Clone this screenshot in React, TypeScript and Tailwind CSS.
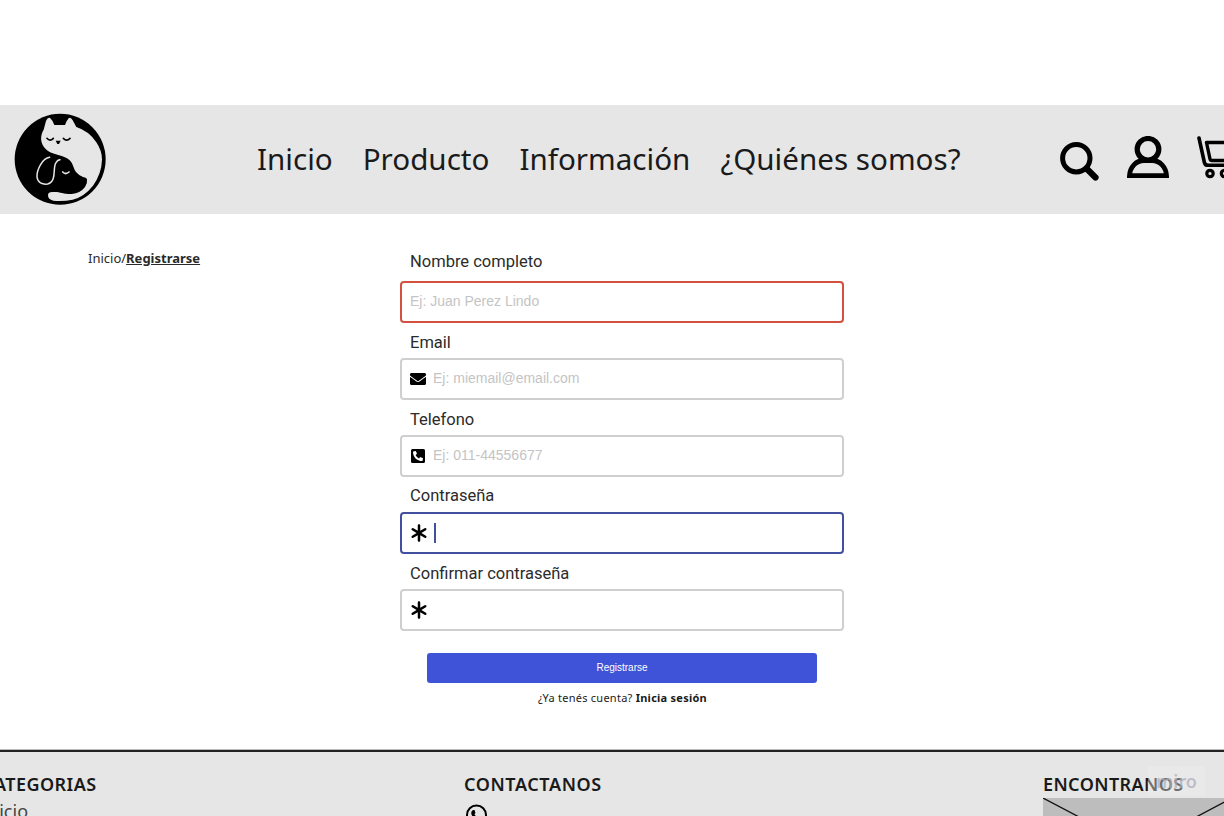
import type { ReactNode } from "react";
import { FaEnvelope, FaPhoneSquareAlt } from "react-icons/fa";
import { FaAsterisk } from "react-icons/fa6";

const noto = "font-['Noto_Sans',sans-serif]";

function Logo() {
  return (
    <svg className="h-[92px] w-[92px] shrink-0" viewBox="42 51 276 276">
      <circle cx="180.500" cy="190" r="136.500" fill="#000" />
      <path
        fill="#e6e6e6"
        d="M131 101L138 75Q144 62 151 67Q157 72 163 87H195Q201 72 206 67Q212 62 218 73L229 93Q267 105 289 139Q306 164 306 191Q305 232 279 269Q252 303 218 311Q189 317 160 314Q144 311 144 298Q144 288 157 288C180 286 190 295 215 294Q242 291 255 273Q263 262 261 249Q259 245 249 243Q237 239 228 228C216 211 222 194 191 182C169 175 150 172 137 159C120 142 120 119 131 101Z"
      />
      <path
        fill="none"
        stroke="#e6e6e6"
        strokeWidth="4.500"
        strokeLinecap="round"
        d="M149 184C128 187 110 219 111 243C113 260 126 266 143 264C172 256 157 213 168 200Q173 191 180 191"
      />
      <g fill="none" stroke="#000" strokeWidth="5" strokeLinecap="round">
        <path d="M141 127Q150 138 160 127" />
        <path d="M190 127Q200 138 210 127" />
      </g>
      <path d="M167 134H182L177 144H172Z" />
      <path d="M188 228Q197 237 207 228" fill="none" stroke="#e6e6e6" strokeWidth="5" strokeLinecap="round" />
    </svg>
  );
}

function SearchIcon() {
  return (
    <svg className="h-[40px] w-[40px] shrink-0" viewBox="0 0 40 40" fill="none" stroke="#000">
      <circle cx="16.300" cy="16.200" r="13.700" strokeWidth="5" />
      <path d="M27 27L35.500 35.500" strokeWidth="6.200" strokeLinecap="round" />
    </svg>
  );
}

function UserIcon() {
  return (
    <svg className="h-[42px] w-[42px] shrink-0" viewBox="0 0 42 42" fill="none" stroke="#000">
      <circle cx="21" cy="13.300" r="10.800" strokeWidth="5.200" />
      <path d="M2.500 39.600C3 31 9 24.500 17 24.500H25C33 24.500 39 31 39.500 39.600Z" strokeWidth="4.800" />
    </svg>
  );
}

function CartIcon() {
  return (
    <svg className="h-[44px] w-[46px] shrink-0" viewBox="0 0 46 44" fill="none" stroke="#000" strokeWidth="3.200">
      <path d="M2 2L7.400 26.500Q8 29.300 11 29.300H38" strokeLinecap="round" strokeWidth="3.600" />
      <path d="M9.500 6.500H40L36 24.500H15Q13.300 24.500 13 23Z" strokeLinejoin="round" strokeWidth="3.400" />
      <circle cx="13" cy="37.500" r="3.200" />
      <circle cx="27.500" cy="37.500" r="3.200" />
    </svg>
  );
}

function Field({
  label,
  labelClass,
  boxClass,
  children,
}: {
  label: string;
  labelClass: string;
  boxClass: string;
  children?: ReactNode;
}) {
  return (
    <label className="block">
      <span
        className={`block pl-[10px] font-['Roboto',sans-serif] text-[16.500px] leading-[20px] text-[#2b2b2b] ${labelClass}`}
      >
        {label}
      </span>
      <span
        className={`flex h-[42px] items-center rounded-[4px] border-2 pb-[1px] pl-[8px] font-['Liberation_Sans',sans-serif] text-[14px] text-[#c4c4c4] ${boxClass}`}
      >
        {children}
      </span>
    </label>
  );
}

export default function App() {
  return (
    <div className={`flex h-[816px] w-[1224px] flex-col overflow-hidden bg-white pt-[105px] text-[#1a1a1a] ${noto}`}>
      <header className="flex h-[109px] shrink-0 items-start bg-[#e6e6e6]">
        <div className="w-[257px] shrink-0 pt-[8px] pl-[14px]">
          <Logo />
        </div>
        <nav className="flex w-[803px] shrink-0 gap-[30px] pt-[34px] text-[29.600px] leading-[40px] whitespace-nowrap">
          <a>Inicio</a>
          <a>Producto</a>
          <a>Información</a>
          <a>¿Quiénes somos?</a>
        </nav>
        <div className="flex shrink-0 pt-[31px]">
          <div className="w-[67px] pt-[6px]">
            <SearchIcon />
          </div>
          <div className="w-[70px]">
            <UserIcon />
          </div>
          <CartIcon />
        </div>
      </header>

      <main className="flex h-[535px] shrink-0">
        <div className="w-[400px] shrink-0 pt-[34px] pl-[88px] text-[13px] leading-[20px] text-[#2a2a2a]">
          Inicio/<b className="underline">Registrarse</b>
        </div>
        <form className="w-[444px] shrink-0 pt-[38px]">
          <Field label="Nombre completo" labelClass="mb-[9px]" boxClass="border-[#d4503f]">
            Ej: Juan Perez Lindo
          </Field>
          <Field label="Email" labelClass="mt-[10px] mb-[5px]" boxClass="border-[#cfcfcf]">
            <FaEnvelope className="mr-[7px] text-[16px] text-black" />
            Ej: miemail@email.com
          </Field>
          <Field label="Telefono" labelClass="mt-[10px] mb-[5px]" boxClass="border-[#cfcfcf]">
            <FaPhoneSquareAlt className="mr-[7px] text-[16px] text-black" />
            Ej: 011-44556677
          </Field>
          <Field label="Contraseña" labelClass="mt-[9px] mb-[6px]" boxClass="border-[#434f9f]">
            <FaAsterisk className="-ml-[1.500px] mr-[5.500px] text-[20px] text-black" />
            <span className="h-[20px] w-[2px] bg-[#434f9f]" />
          </Field>
          <Field label="Confirmar contraseña" labelClass="mt-[10px] mb-[5px]" boxClass="border-[#cfcfcf]">
            <FaAsterisk className="-ml-[1.500px] text-[20px] text-black" />
          </Field>
          <button
            type="button"
            className="mt-[22px] ml-[27px] block h-[30px] w-[390px] rounded-[3px] bg-[#3e53d7] pb-[1px] font-['Liberation_Sans',sans-serif] text-[10px] text-white"
          >
            Registrarse
          </button>
          <p className="mt-[7px] pl-[1px] text-center text-[11px] leading-[16px] tracking-[0.250px] whitespace-nowrap">
            ¿Ya tenés cuenta? <b>Inicia sesión</b>
          </p>
        </form>
      </main>

      <div className="h-[1px] shrink-0 bg-[#bcbcbc]" />
      <footer className="relative flex h-[66px] shrink-0 overflow-hidden border-t-2 border-[#222] bg-[#e6e6e6] text-[18px] leading-[24px] whitespace-nowrap">
        <section className="-ml-[18px] w-[482px] shrink-0 pt-[20px]">
          <h2 className="font-semibold tracking-[0.450px]">CATEGORIAS</h2>
          <p className="pt-[3px] text-[#444]">Inicio</p>
        </section>
        <section className="w-[579px] shrink-0 pt-[20px]">
          <h2 className="font-semibold tracking-[0.600px]">CONTACTANOS</h2>
          <svg className="mt-[8px] ml-[2px] h-[22px] w-[22px]" viewBox="0 0 22 22">
            <circle cx="10.500" cy="11" r="9.500" fill="none" stroke="#000" strokeWidth="2" />
            <path d="M7 6Q4.500 7.500 5.500 10.500Q8 16 14 16L16 14L13 12L11.500 13Q9 12 8.500 10L9.500 9L8.500 6Z" />
          </svg>
        </section>
        <section className="shrink-0 pt-[20px]">
          <h2 className="font-semibold tracking-[0.400px]">ENCONTRANOS</h2>
          <svg className="mt-[2px] h-[100px] w-[200px] bg-[#bdbdbd]" viewBox="0 0 200 100">
            <path d="M0 0L190 100M208 -10L0 100" fill="none" stroke="#111" strokeWidth="1.300" />
          </svg>
        </section>
        <div className="absolute top-[14px] left-[1148px] flex h-[30px] w-[57px] items-center justify-center bg-[#eeeeee]/40 text-[18px] font-semibold text-[#aaaab8]/70">
          miro
        </div>
      </footer>
    </div>
  );
}
